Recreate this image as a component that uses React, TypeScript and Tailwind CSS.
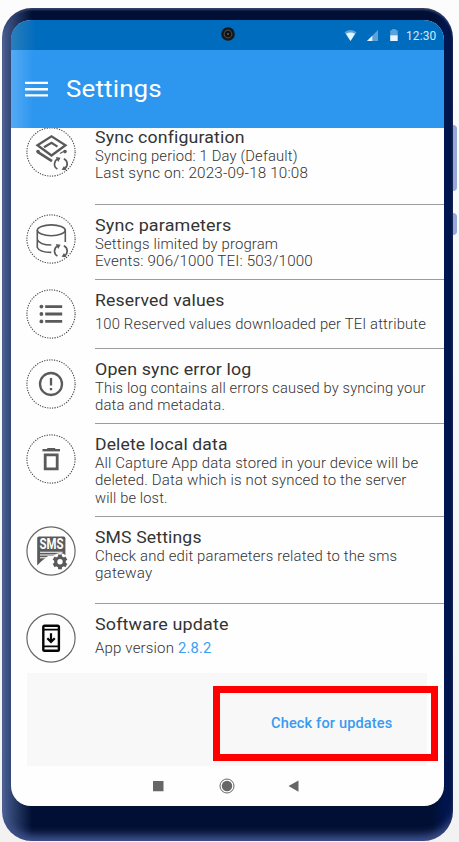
import { useLayoutEffect, useRef, useState, type ReactNode } from "react";

/* One line of text whose glyphs are stretched horizontally so that it spans `width` pixels. */
function Line({ text, width, className = "" }: { text: string; width: number; className?: string }) {
  const ref = useRef<HTMLSpanElement>(null);
  const [scale, setScale] = useState(1);
  useLayoutEffect(() => {
    const fit = () => {
      if (ref.current) setScale(width / ref.current.offsetWidth);
    };
    fit();
    document.fonts.ready.then(fit);
  }, [text, width]);
  return (
    <span className="inline-block whitespace-pre" style={{ width: `${width}px` }}>
      <span ref={ref} className={`inline-block origin-left tracking-[0.15px] ${className}`} style={{ transform: `scaleX(${scale})` }}>
        {text}
      </span>
    </span>
  );
}

function Badge({ children, solid = false }: { children: ReactNode; solid?: boolean }) {
  return (
    <svg viewBox="0 0 50 50" className="size-[50px] shrink-0" fill="none" stroke="#5a5a5a">
      <circle cx="25" cy="25" r="24.1" stroke={solid ? "#686868" : "#4a4a4a"} strokeWidth={solid ? 1.2 : 1.1} strokeDasharray={solid ? undefined : "1.25 1.27"} />
      {children}
    </svg>
  );
}

const SyncArrows = () => (
  <g strokeWidth="1.7">
    <path d="M31.4 42A5.6 5.6 0 0 1 32.3 31.8M37.8 31.8A5.6 5.6 0 0 1 38 42" />
    <path d="M29.8 29.9 34.6 30.8 32.2 34.9ZM40.4 43.3 35.6 42.8 38 38.9Z" fill="#5a5a5a" stroke="none" />
  </g>
);

const LayersIcon = () => (
  <>
    <path d="M11.5 18.2 25.5 9.4 39.5 18.2 25.5 28.5Z" strokeWidth="2.3" />
    <path d="M18 20.2 25.5 15.8 31.5 19.6" strokeWidth="2.2" />
    <path d="M11.5 24.8 26 34.2" strokeWidth="2.6" />
    <path d="M34 26.5 38.5 24" strokeWidth="1.2" />
    <circle cx="12" cy="24.6" r="1.8" fill="#5a5a5a" stroke="none" />
    <circle cx="39" cy="24.6" r="1.8" fill="#5a5a5a" stroke="none" />
    <SyncArrows />
  </>
);

const DatabaseIcon = () => (
  <>
    <g strokeWidth="1.6">
      <ellipse cx="25.3" cy="16.3" rx="14" ry="5.4" />
      <path d="M11.3 16.3V33.5Q13.5 38.4 25.3 38.4M39.3 16.3V28M11.3 25.5Q13.5 31 25.3 31" />
    </g>
    <SyncArrows />
  </>
);

const ListIcon = () => (
  <>
    <path d="M19.2 17.6H36.2M19.2 25H36.2M19.2 32.4H36.2" strokeWidth="2.8" />
    <g fill="#5a5a5a" stroke="none">
      <circle cx="15.4" cy="17.6" r="1.9" />
      <circle cx="15.4" cy="25" r="1.9" />
      <circle cx="15.4" cy="32.4" r="1.9" />
    </g>
  </>
);

const AlertIcon = () => (
  <>
    <circle cx="25" cy="25" r="11" strokeWidth="2.3" />
    <path d="M25 19V26.5M25 29V31.3" strokeWidth="2.3" />
  </>
);

const TrashIcon = () => (
  <>
    <path d="M19.2 20.8H31.2V34.8H19.2Z" strokeWidth="2.8" />
    <path d="M16.5 16.2H34" strokeWidth="2.4" />
    <path d="M21.2 16V14H29.2V16Z" fill="#5a5a5a" stroke="none" />
  </>
);

const SmsIcon = () => (
  <>
    <path d="M12.9 10.4H37.7Q39.4 10.4 39.4 12V30H22L16.3 34.6Q13.5 37.2 11.2 39.4V12Q11.2 10.4 12.9 10.4Z" fill="#5a5a5a" stroke="none" />
    <text x="13.4" y="23.3" textLength="24" lengthAdjust="spacingAndGlyphs" fill="#fff" stroke="none" className="font-['Roboto',sans-serif] text-[14px] font-bold">SMS</text>
    <path d="M14 26.2H36.6M14 29H30M14 31.8H27" stroke="#fff" strokeWidth="1.1" />
    <circle cx="34" cy="35.8" r="8.8" fill="#fff" stroke="none" />
    <circle cx="34" cy="35.8" r="4.3" strokeWidth="3.2" />
    <g strokeWidth="3.8">
      <path d="M34 31.8V28.4M34 39.8V43.2M37.5 33.8 40.4 32.1M37.5 37.8 40.4 39.5M30.5 33.8 27.6 32.1M30.5 37.8 27.6 39.5" />
    </g>
  </>
);

const UpdateIcon = () => (
  <g stroke="#050505">
    <rect x="17.3" y="12.7" width="15.6" height="25" rx="1.3" strokeWidth="2.4" />
    <path d="M17 16.6H33M17 33.3H33" strokeWidth="1.8" />
    <path d="M25 20.3V28.7M21.3 25.2 25 28.9 28.8 25.2" strokeWidth="2.2" />
  </g>
);

type Item = {
  title: string;
  titleWidth: number;
  lines: [string, number][];
  icon: ReactNode;
  height: string;
  solid?: boolean;
  roomy?: boolean;
};

const items: Item[] = [
  { title: "Sync configuration", titleWidth: 150, height: "h-[87.5px]", icon: <LayersIcon />, lines: [["Syncing period: 1 Day (Default)", 202.5], ["Last sync on: 2023-09-18 10:08", 213]] },
  { title: "Sync parameters", titleWidth: 136, height: "h-[75px]", icon: <DatabaseIcon />, lines: [["Settings limited by program", 183], ["Events: 906/1000 TEI: 503/1000", 217.5]] },
  { title: "Reserved values", titleWidth: 129.5, height: "h-[69.5px]", roomy: true, icon: <ListIcon />, lines: [["100 Reserved values downloaded per TEI attribute", 331]] },
  { title: "Open sync error log", titleWidth: 156, height: "h-[75px]", icon: <AlertIcon />, lines: [["This log contains all errors caused by syncing your", 330.5], ["data and metadata.", 130.5]] },
  { title: "Delete local data", titleWidth: 133, height: "h-[92.5px]", icon: <TrashIcon />, lines: [["All Capture App data stored in your device will be", 323], ["deleted. Data which is not synced to the server", 311.5], ["will be lost.", 72.5]] },
  { title: "SMS Settings", titleWidth: 106.5, height: "h-[87px]", solid: true, icon: <SmsIcon />, lines: [["Check and edit parameters related to the sms", 302.5], ["gateway", 57.5]] },
  { title: "Software update", titleWidth: 134, height: "h-[69.5px]", solid: true, roomy: true, icon: <UpdateIcon />, lines: [["App version ", 83]] },
];

function SettingRow({ item, last }: { item: Item; last: boolean }) {
  return (
    <div className={`flex shrink-0 ${item.height}`}>
      <div className="w-[84px] shrink-0 pt-[9.5px] pl-[15px]">
        <Badge solid={item.solid}>{item.icon}</Badge>
      </div>
      <div className={`flex-1 pt-[9px] ${last ? "" : "border-b border-[#9c9c9c]"}`}>
        <div className="h-[22px] text-[17px] leading-[22px] text-[#333]">
          <Line text={item.title} width={item.titleWidth} />
        </div>
        <div className={`text-[14.3px] font-light text-[#333] ${item.roomy ? "pt-[5.8px]" : ""}`}>
          {item.lines.map(([text, width]) => (
            <div key={text} className="flex h-[17.3px] leading-[17.3px]">
              <Line text={text} width={width} />
              {last && <Line text="2.8.2" width={33} className="font-normal text-[#3d9df2]" />}
            </div>
          ))}
        </div>
      </div>
    </div>
  );
}

export default function App() {
  return (
    <div className="relative h-[842px] w-[459px] overflow-hidden bg-linear-to-b from-[#fcfcfc] to-[#f2f2f2] font-['Roboto',sans-serif]">
      <div className="absolute top-[125px] right-[2px] h-[66px] w-[8px] rounded-r bg-[#98a8d8]" />
      <div className="absolute top-[213px] right-[2px] h-[22px] w-[8px] rounded-r bg-[#98a8d8]" />
      <div className="relative mt-2 ml-[2px] h-[833px] w-[451px] rounded-[30px] bg-[#000f33] bg-[linear-gradient(90deg,#60709f_0px,#42598c_3px,#354a78_8px,transparent_30px,transparent_430px,#001650_444px,#001445_451px)] pt-3 pl-[9px] shadow-[inset_0_2px_2px_#35406a,inset_0_-11px_8px_-5px_#40528d]">
        <main className="flex h-[786px] w-[433px] flex-col overflow-hidden rounded-[20px] bg-[#fefefe]">
          <div className="relative z-10 flex h-[30px] shrink-0 items-center justify-end bg-[#006cbe] bg-[linear-gradient(90deg,#2b7ebb,transparent_25px)] pr-2">
            <svg viewBox="0 0 14 14" className="absolute top-[7px] left-[210px] size-[14px]">
              <circle cx="7" cy="7" r="6.8" fill="#151719" />
              <circle cx="7" cy="7" r="3.8" fill="#111" stroke="#444" strokeWidth="1.2" />
              <circle cx="7" cy="7" r="1.1" fill="#5a5a5a" />
            </svg>
            <svg viewBox="0 0 54 13" className="mr-[8px] h-[13px] w-[54px]" fill="#e5f4ff">
              <path d="M0.5 3.2Q6.5 -1.2 12.5 3.2L6.5 12Z" opacity=".4" />
              <path d="M2 4.8Q6.5 2.4 11 4.8L6.5 12Z" />
              <path d="M23 12 34 1V12Z" opacity=".4" />
              <path d="M23 12 28.3 6.7V12Z" />
              <path d="M46.2 1.2H48.2V0H51.7V1.2H53.7V6.5H46.2Z" opacity=".4" />
              <path d="M46.2 6.3H53.7V12H46.2Z" />
            </svg>
            <span className="pt-px text-[12.3px] leading-4 text-[#d3e8f9]"><Line text="12:30" width={30} /></span>
          </div>
          <header className="z-10 flex h-[77.5px] shrink-0 items-center gap-[18px] bg-[#2d97f0] bg-[linear-gradient(90deg,#55aaf4,transparent_22px)] pl-[14px] text-white">
            <svg viewBox="0 0 23 16" className="h-4 w-[23px]" stroke="#fff" strokeWidth="2.4">
              <path d="M0 1.9H23M0 8.2H23M0 14.4H23" />
            </svg>
            <h1 className="text-[24px] leading-7 font-normal"><Line text="Settings" width={96} /></h1>
          </header>
          <section className="-mt-[10.5px] flex flex-col">
            {items.map((item, i) => (
              <SettingRow key={item.title} item={item} last={i === items.length - 1} />
            ))}
          </section>
          <div className="mr-[17px] ml-4 flex h-[93px] shrink-0 items-center justify-end bg-[#f8f8f8]">
            <button className="relative -right-[11px] mt-[7px] flex h-[75px] w-[225px] items-center justify-end border-[7px] border-[#fe0000] pt-px pr-[38.5px] text-[14.5px] font-medium text-[#389bf0]">
              <Line text="Check for updates" width={121.5} />
            </button>
          </div>
          <nav className="flex flex-1 items-center pl-[142px]">
            <svg viewBox="0 0 146 16" className="h-4 w-[146px]" fill="#666">
              <path d="M0 3H10.5V13.2H0Z" />
              <circle cx="74" cy="8" r="7" fill="none" stroke="#666" strokeWidth="1" />
              <circle cx="74" cy="8" r="5.2" />
              <path d="M135.5 8 145.5 2.5V13.7Z" />
            </svg>
          </nav>
        </main>
      </div>
    </div>
  );
}
